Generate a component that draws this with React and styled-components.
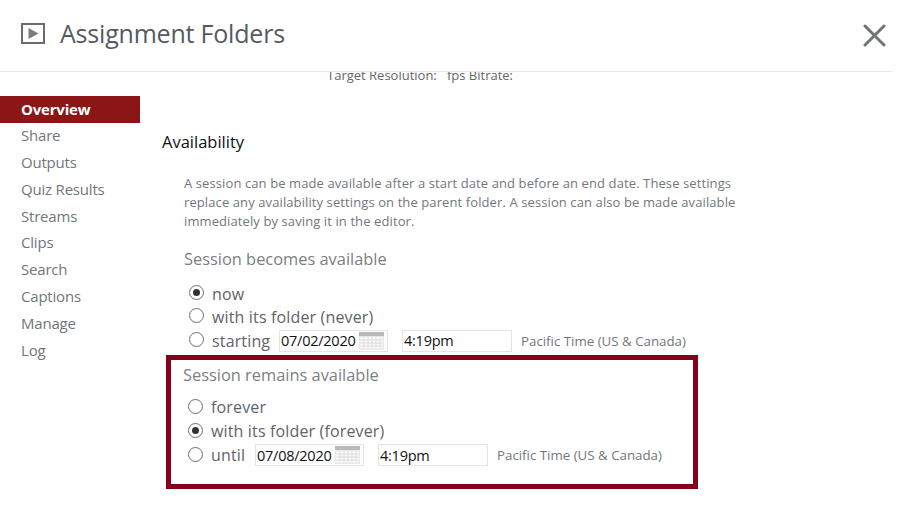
import React from "react";
import styled, { createGlobalStyle } from "styled-components";

const GlobalStyle = createGlobalStyle`
  html, body {
    margin: 0;
    padding: 0;
    background: #fff;
    font-family: "Open Sans", "Noto Sans", sans-serif;
  }
`;

const Page = styled.div`
  width: 911px;
  height: 509px;
  overflow: hidden;
`;

const Header = styled.header`
  width: 893px;
  height: 72px;
  box-sizing: border-box;
  border-bottom: 1px solid #e9e9e9;
  display: flex;
  align-items: center;
  padding: 0 7px 5px 21px;
`;

const Title = styled.h1`
  flex: 1;
  margin: 0 0 0 15px;
  font-size: 25px;
  font-weight: 400;
  letter-spacing: -0.2px;
  color: #555a60;
`;

const CloseButton = styled.span`
  display: flex;
  margin-top: 5px;
`;

const Body = styled.div`
  display: flex;
`;

const Sidebar = styled.nav`
  width: 140px;
  flex: none;
  padding-top: 24px;
`;

const NavItem = styled.div`
  height: 26.9px;
  line-height: ${(p) => (p.$active ? 27 : 25.4)}px;
  padding-left: 21px;
  font-size: 15px;
  letter-spacing: -0.2px;
  color: ${(p) => (p.$active ? "#fff" : "#72767b")};
  background: ${(p) => (p.$active ? "#8c1515" : "transparent")};
  font-weight: ${(p) => (p.$active ? 700 : 400)};
`;

const Main = styled.main`
  flex: 1;
  min-width: 0;
`;

const Clipped = styled.div`
  height: 11px;
  overflow: hidden;
  padding-left: 187px;
  font-size: 13px;
  line-height: 14px;
  color: #666;
  white-space: pre;
`;

const ClippedLine = styled.div`
  margin-top: -4px;
`;

const SectionTitle = styled.h2`
  margin: 47px 0 0 22px;
  font-size: 16.5px;
  line-height: 24px;
  font-weight: 400;
  color: #111;
`;

const Help = styled.p`
  width: 570px;
  margin: 20px 0 0 44px;
  font-size: 13px;
  line-height: 19px;
  letter-spacing: 0.1px;
  color: #73777c;
`;

const GroupTitle = styled.h3`
  margin: ${(p) => p.$top}px 0 0 ${(p) => p.$left}px;
  font-size: 16.4px;
  line-height: 22px;
  font-weight: 400;
  color: #7b7f84;
`;

const Options = styled.div`
  margin: ${(p) => p.$top}px 0 0 ${(p) => p.$left}px;
  display: flex;
  flex-direction: column;
`;

const OptionRow = styled.div`
  height: ${(p) => p.$h}px;
  display: flex;
  align-items: center;
  font-size: 16px;
  letter-spacing: 0.15px;
  color: #5f6368;
`;

const Radio = styled.span`
  width: 15px;
  height: 15px;
  box-sizing: border-box;
  flex: none;
  margin-right: 8px;
  border: 1px solid #6e6e6e;
  border-radius: 50%;
  display: flex;
  align-items: center;
  justify-content: center;
  position: relative;
  top: -1px;
  &::after {
    content: "";
    width: 7px;
    height: 7px;
    border-radius: 50%;
    background: ${(p) => (p.$checked ? "#333" : "transparent")};
  }
`;

const RowLabel = styled.span`
  width: ${(p) => p.$w}px;
  flex: none;
`;

const DateField = styled.div`
  width: 109px;
  height: 22px;
  box-sizing: border-box;
  flex: none;
  border: 1px solid #e4e4e4;
  display: flex;
  align-items: center;
  justify-content: space-between;
  padding: 0 3px 0 1px;
  font-size: 14.5px;
  letter-spacing: -0.25px;
  color: #111;
`;

const TimeField = styled(DateField)`
  width: 110px;
  margin-left: 14px;
`;

const Zone = styled.span`
  margin-left: 9px;
  font-size: 13.3px;
  letter-spacing: 0;
  color: #73777c;
`;

const Highlight = styled.section`
  width: 532px;
  height: 134px;
  box-sizing: border-box;
  margin: 2px 0 0 26px;
  border: 5px solid #85001a;
`;

function CalendarIcon() {
  return (
    <svg width="25" height="18" viewBox="0 0 25 18">
      <rect x="0" y="0" width="25" height="18" fill="#e8e8e8" />
      <rect x="0" y="0" width="25" height="4" fill="#b9b9b9" />
      <rect x="1.5" y="5" width="22" height="11.5" fill="#fbfbfb" />
      <path
        d="M1.5 8h22M1.5 11h22M1.5 14h22M5 5v11.5M9 5v11.5M13 5v11.5M17 5v11.5M21 5v11.5"
        stroke="#dcdcdc"
        strokeWidth="1"
        fill="none"
      />
    </svg>
  );
}

function PlayIcon() {
  return (
    <svg width="24" height="21" viewBox="0 0 24 21">
      <rect x="1" y="1" width="22" height="19" fill="none" stroke="#6d6d6d" strokeWidth="2" />
      <path d="M7.5 5l10 5.5-10 5.5z" fill="#7d7d7d" />
    </svg>
  );
}

function CloseIcon() {
  return (
    <svg width="23" height="23" viewBox="0 0 23 23">
      <path d="M2 2l19 19M21 2L2 21" stroke="#6f7477" strokeWidth="3" strokeLinecap="round" />
    </svg>
  );
}

const navItems = ["Overview", "Share", "Outputs", "Quiz Results", "Streams", "Clips", "Search", "Captions", "Manage", "Log"];

function RangeRow({ label, labelWidth, date, height }) {
  return (
    <OptionRow $h={height}>
      <Radio />
      <RowLabel $w={labelWidth}>{label}</RowLabel>
      <DateField>
        {date}
        <CalendarIcon />
      </DateField>
      <TimeField>4:19pm</TimeField>
      <Zone>Pacific Time (US &amp; Canada)</Zone>
    </OptionRow>
  );
}

export default function App() {
  return (
    <Page>
      <GlobalStyle />
      <Header>
        <PlayIcon />
        <Title>Assignment Folders</Title>
        <CloseButton>
          <CloseIcon />
        </CloseButton>
      </Header>
      <Body>
        <Sidebar>
          {navItems.map((item, i) => (
            <NavItem key={item} $active={i === 0}>{item}</NavItem>
          ))}
        </Sidebar>
        <Main>
          <Clipped>
            <ClippedLine>{"Target Resolution:   fps Bitrate:"}</ClippedLine>
          </Clipped>
          <SectionTitle>Availability</SectionTitle>
          <Help>
            A session can be made available after a start date and before an end date. These settings
            replace any availability settings on the parent folder. A session can also be made available
            immediately by saving it in the editor.
          </Help>
          <GroupTitle $top={17} $left={44}>Session becomes available</GroupTitle>
          <Options $top={12} $left={49}>
            <OptionRow $h={23}><Radio $checked />now</OptionRow>
            <OptionRow $h={23}><Radio />with its folder (never)</OptionRow>
            <RangeRow label="starting" labelWidth={67} date="07/02/2020" height={25} />
          </Options>
          <Highlight>
            <GroupTitle $top={4} $left={12}>Session remains available</GroupTitle>
            <Options $top={9} $left={17}>
              <OptionRow $h={24}><Radio />forever</OptionRow>
              <OptionRow $h={24}><Radio $checked />with its folder (forever)</OptionRow>
              <RangeRow label="until" labelWidth={44} date="07/08/2020" height={24} />
            </Options>
          </Highlight>
        </Main>
      </Body>
    </Page>
  );
}
